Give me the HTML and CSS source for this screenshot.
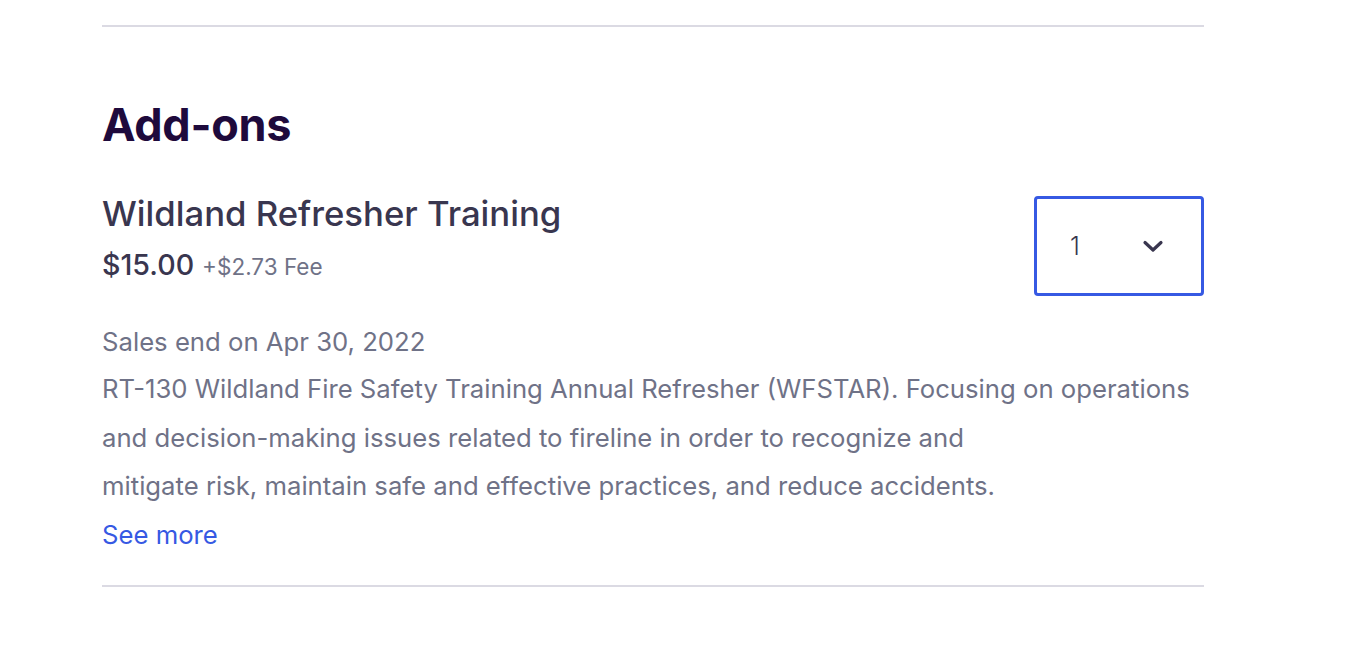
FILE: index.html
```html
<!DOCTYPE html>
<html lang="en">
<head>
  <meta charset="UTF-8" />
  <title>Add-ons</title>
  <link rel="stylesheet" href="styles.css">
</head>
<body>
  <div class="page">
    <hr class="divider top-divider">

    <h2 class="section-title">Add-ons</h2>

    <div class="addon">
      <div class="addon-head">
        <div class="addon-info">
          <div class="addon-name">Wildland Refresher Training</div>
          <div class="addon-price">
            <span class="price">$15.00</span>
            <span class="fee">+$2.73 Fee</span>
          </div>
        </div>
        <div class="qty-select">
          <span class="qty-value">1</span>
          <svg class="chevron" width="24" height="24" viewBox="0 0 24 24">
            <path d="M4 8.5 L12 16 L20 8.5" fill="none" stroke="#39364f" stroke-width="3.2" stroke-linecap="round" stroke-linejoin="round"/>
          </svg>
        </div>
      </div>

      <div class="addon-body">
        <div class="sales-end">Sales end on Apr 30, 2022</div>
        <p class="addon-desc">RT-130 Wildland Fire Safety Training Annual Refresher (WFSTAR). Focusing on operations and decision-making issues related to fireline in order to recognize and<br>mitigate risk, maintain safe and effective practices, and reduce accidents.</p>
        <a class="see-more" href="#">See more</a>
      </div>
    </div>

    <hr class="divider">
  </div>
</body>
</html>
```

FILE: styles.css
```css
body {
  margin: 0;
  background: #ffffff;
  font-family: Inter, "Noto Sans", sans-serif;
  color: #39364f;
}

.page {
  width: 1102px;
  margin-left: 102px;
  padding-top: 25px;
}

.divider {
  border: none;
  border-top: 2px solid #dbdae3;
  margin: 0;
}

.section-title {
  margin: 72px 0 0;
  font-size: 45px;
  font-weight: 700;
  line-height: 52px;
  color: #1e0a3c;
  letter-spacing: -0.3px;
}

.addon {
  margin-top: 42px;
  padding-bottom: 26px;
}

.addon-head {
  display: flex;
  justify-content: space-between;
  align-items: flex-start;
}

.addon-name {
  font-size: 34.7px;
  font-weight: 500;
  line-height: 40px;
  color: #39364f;
}

.addon-price {
  margin-top: 16px;
  display: flex;
  align-items: baseline;
  gap: 8px;
  line-height: 32px;
}

.price {
  font-size: 28.6px;
  font-weight: 500;
  color: #39364f;
}

.fee {
  font-size: 22.5px;
  color: #6f7287;
}

.qty-select {
  width: 170px;
  height: 100px;
  margin-top: 3px;
  border: 3px solid #3659e3;
  border-radius: 4px;
  display: flex;
  align-items: center;
  justify-content: space-between;
  padding: 0 36px 0 33px;
  box-sizing: border-box;
}

.qty-value {
  font-size: 25px;
  font-weight: 300;
  color: #39364f;
}

.addon-body {
  margin-top: 23px;
  color: #6f7287;
  font-size: 25.7px;
}

.sales-end {
  line-height: 46px;
}

.addon-desc {
  margin: 0;
  line-height: 48.5px;
}

.see-more {
  display: inline-block;
  line-height: 48px;
  color: #3659e3;
  text-decoration: none;
}
```
